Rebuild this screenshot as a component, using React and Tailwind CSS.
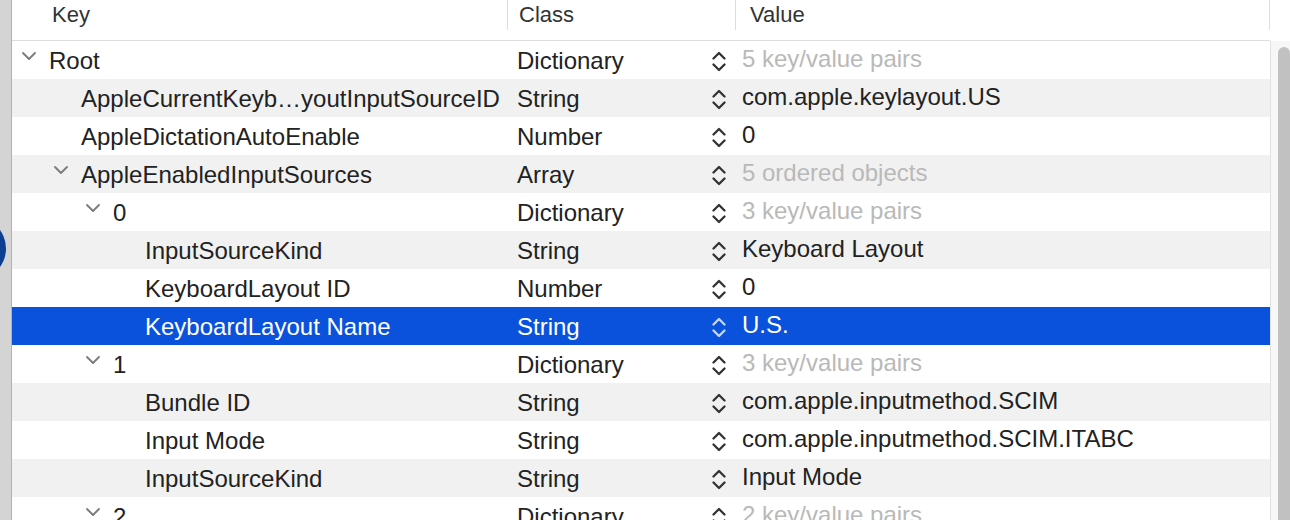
import React from 'react';

const rows = [
    { key: 'Root', level: 0, open: true, cls: 'Dictionary', value: '5 key/value pairs', dim: true },
    { key: 'AppleCurrentKeyb\u2026youtInputSourceID', level: 1, cls: 'String', value: 'com.apple.keylayout.US' },
    { key: 'AppleDictationAutoEnable', level: 1, cls: 'Number', value: '0' },
    { key: 'AppleEnabledInputSources', level: 1, open: true, cls: 'Array', value: '5 ordered objects', dim: true },
    { key: '0', level: 2, open: true, cls: 'Dictionary', value: '3 key/value pairs', dim: true },
    { key: 'InputSourceKind', level: 3, cls: 'String', value: 'Keyboard Layout' },
    { key: 'KeyboardLayout ID', level: 3, cls: 'Number', value: '0' },
    { key: 'KeyboardLayout Name', level: 3, cls: 'String', value: 'U.S.', selected: true },
    { key: '1', level: 2, open: true, cls: 'Dictionary', value: '3 key/value pairs', dim: true },
    { key: 'Bundle ID', level: 3, cls: 'String', value: 'com.apple.inputmethod.SCIM' },
    { key: 'Input Mode', level: 3, cls: 'String', value: 'com.apple.inputmethod.SCIM.ITABC' },
    { key: 'InputSourceKind', level: 3, cls: 'String', value: 'Input Mode' },
    { key: '2', level: 2, open: true, cls: 'Dictionary', value: '2 key/value pairs', dim: true },
];

const indent = ['pl-[10px]', 'pl-[42px]', 'pl-[74px]', 'pl-[106px]'];

const Disclosure = () => (
    <svg width="14" height="8" viewBox="0 0 14 8" className="mt-[5px]">
        <path d="M1 1 L7 7 L13 1" fill="none" stroke="#7b7b7b" strokeWidth="1.8" strokeLinecap="round" strokeLinejoin="round" />
    </svg>
);

const Stepper = ({ light }) => (
    <svg width="14" height="21" viewBox="0 0 14 21">
        <g fill="none" stroke={light ? '#c9d7f6' : '#333333'} strokeWidth="2.3" strokeLinecap="round" strokeLinejoin="round">
            <path d="M1.5 7.5 L7 2 L12.5 7.5" />
            <path d="M1.5 13.5 L7 19 L12.5 13.5" />
        </g>
    </svg>
);

const Row = ({ row, index }) => {
    const bg = row.selected ? 'bg-[#0a52dc]' : index % 2 === 1 ? 'bg-[#f0f1f0]' : 'bg-white';
    const text = row.selected ? 'text-white' : 'text-[#222222]';
    return (
        <div className={`flex h-[38px] shrink-0 ${bg} ${text}`}>
            <div className={`w-[495px] flex items-start pt-[6px] ${indent[row.level]}`}>
                <div className="w-[27px] h-[28px] flex items-start">{row.open && <Disclosure />}</div>
                <span className="leading-[28px] whitespace-nowrap">{row.key}</span>
            </div>
            <div className="w-[228px] flex items-start justify-between pt-[6px] pl-[10px] pr-[9px]">
                <span className="leading-[28px]">{row.cls}</span>
                <div className="pt-[4px]"><Stepper light={row.selected} /></div>
            </div>
            <div className={`flex-1 pt-[4px] pl-[7px] leading-[28px] whitespace-nowrap ${row.dim ? 'text-[#b9b9b9]' : ''}`}>
                {row.value}
            </div>
        </div>
    );
};

const App = () => {
    return (
        <div className="w-[1290px] h-[520px] overflow-hidden flex bg-white text-[24px]" style={{ fontFamily: '"Liberation Sans", Arial, sans-serif' }}>
            <div className="relative w-[12px] shrink-0 bg-[#d4d4d4] border-r border-[#b3b3b3] overflow-hidden">
                <div className="absolute left-[-57px] top-[217px] w-[63px] h-[63px] rounded-full bg-[#0c3e92]" />
            </div>
            <div className="w-[1258px] shrink-0 flex flex-col">
                <div className="h-[41px] shrink-0 flex border-b border-[#dedede] text-[22px] text-[#333333]">
                    <div className="w-[495px] pl-[40px] pt-[2px] leading-[26px]">Key</div>
                    <div className="w-px h-[30px] bg-[#dddddd]" />
                    <div className="w-[227px] pl-[11px] pt-[2px] leading-[26px]">Class</div>
                    <div className="w-px h-[30px] bg-[#dddddd]" />
                    <div className="flex-1 pl-[14px] pt-[2px] leading-[26px]">Value</div>
                    <div className="w-px h-[30px] bg-[#dddddd]" />
                </div>
                {rows.map((row, i) => (
                    <Row key={i} row={row} index={i} />
                ))}
            </div>
            <div className="flex-1 flex flex-col">
                <div className="h-[41px] shrink-0 bg-white" />
                <div className="flex-1 flex bg-[#f7f7f7] border-l border-[#e2e2e2]">
                    <div className="w-[7px]" />
                    <div className="flex-1 mt-[6px] rounded-t-full bg-[#c1c1c1]" />
                </div>
            </div>
        </div>
    );
};

export default App;
